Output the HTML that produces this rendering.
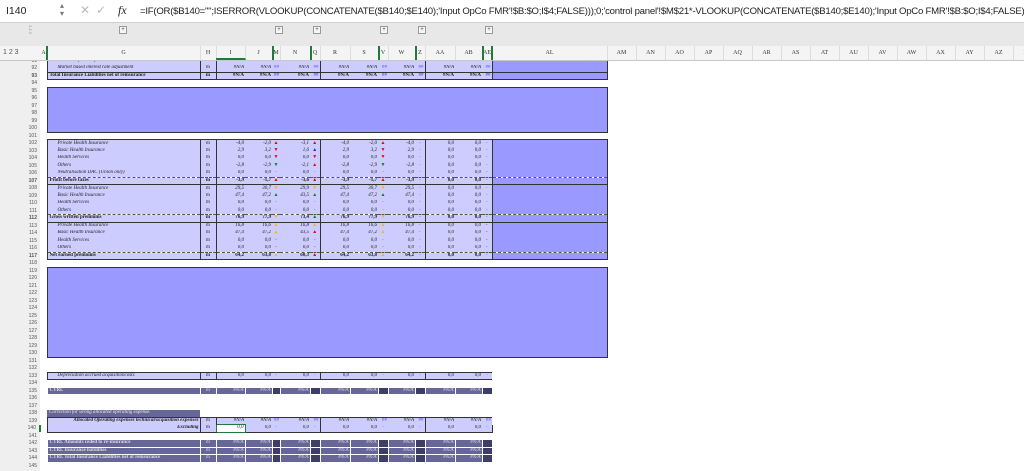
<!DOCTYPE html>
<html><head><meta charset="utf-8"><style>
body{margin:0;width:1024px;height:471px;overflow:hidden;background:#fff;position:relative;font-family:"Liberation Sans",sans-serif}
#fb{position:absolute;left:0;top:0;width:1024px;height:22px;background:#fff;border-bottom:1px solid #d0d0d0;z-index:5;font-size:10.5px;color:#222;overflow:hidden}
#fb span{position:absolute;top:5px;white-space:nowrap}
#ob{position:absolute;left:0;top:23px;width:1024px;height:23px;background:#e8e8e8;z-index:5}
.pl{position:absolute;top:3px;width:6px;height:6px;border:1px solid #999;background:#f6f6f6;font-size:6px;line-height:6px;text-align:center;color:#555}
#ch{position:absolute;left:0;top:46px;width:1024px;height:14px;background:#f4f4f4;border-bottom:1px solid #c8c8c8;z-index:5;font-family:"Liberation Serif",serif;font-size:6px;color:#333}
#ch div{position:absolute;top:0;height:14px;line-height:14px;text-align:center;border-right:1px solid #ddd}
#ch i{position:absolute;top:0;width:2px;height:14px;background:#1f7a3c}
#lft{position:absolute;left:0;top:60px;width:40px;height:411px;background:#efefef}
table{position:absolute;top:57px;left:0;border-collapse:collapse;table-layout:fixed}
td{height:7.5px;padding:0 1px;font:italic 5px "Liberation Serif",serif;white-space:nowrap;overflow:hidden;line-height:6px;text-align:right;color:#222;box-sizing:border-box}
td.rh{background:#efefef;font-style:normal;font-family:"Liberation Sans",sans-serif;font-size:5px;color:#555;text-align:right;padding-right:3px}
tr.n td:nth-child(n+3){background:#ccccff}
tr.n td:nth-child(18){background:#9999ff}
tr.n td:nth-child(3),tr.n td:nth-child(4),tr.n td:nth-child(5),tr.n td:nth-child(10),tr.n td:nth-child(15),tr.n td:nth-child(18){border-left:1px solid #333}
tr.n td:nth-child(18){border-right:1px solid #333}
tr.t td:nth-child(n+3){border-top:1px solid #333}
tr.bt td:nth-child(n+3){border-bottom:1px solid #333}
tr.ds td:nth-child(n+3){border-top:1px dashed #555}
td.g{text-align:left;padding-left:10px}
tr.B td{font-style:normal;font-weight:bold}
tr.B td.g{padding-left:2px}
td.h{text-align:center;font-style:normal}
td.ar{text-align:center;font-style:normal;font-size:5px;color:#66f}
.r{color:#e00!important}.bl{color:#22e!important}.gr{color:#080!important}.y{color:#eb0!important}
.big{background:#9999ff;border:1px solid #333}
tr.c td:nth-child(n+3){background:#666699;color:#ddd;border:1px solid #fff}
tr.c td.k{background:#3d3d66}
tr.c td.g{text-align:left;padding-left:2px;font-weight:bold;font-style:normal}
.hs{color:#55f!important;font-style:normal}
</style></head><body>
<div id="fb"><span style="left:6px">I140</span><span style="left:60px;top:2px;font-size:8px;color:#777;line-height:8px">▴<br>▾</span><span style="left:80px;color:#bbb;font-size:12px;top:3px">✕</span><span style="left:96px;color:#bbb;font-size:12px;top:3px">✓</span><span style="left:118px;font-family:'Liberation Serif',serif;font-style:italic;font-size:12px;top:3px">fx</span><span style="left:140px;font-size:9.6px;letter-spacing:-0.25px;top:6px">=IF(OR($B140="";ISERROR(VLOOKUP(CONCATENATE($B140;$E140);'Input OpCo FMR'!$B:$O;I$4;FALSE)));0;'control panel'!$M$21*-VLOOKUP(CONCATENATE($B140;$E140);'Input OpCo FMR'!$B:$O;I$4;FALSE))</span></div>
<div id="ob"><div class="pl" style="left:119px">+</div><div class="pl" style="left:275px">+</div><div class="pl" style="left:313px">+</div><div class="pl" style="left:380px">+</div><div class="pl" style="left:418px">+</div><div class="pl" style="left:485px">+</div><div style="position:absolute;left:28px;top:2px;font-size:4px;color:#888;writing-mode:vertical-rl">1 2 3</div></div>
<div id="ch"><span style="position:absolute;left:3px;top:3px;font-family:'Liberation Sans';font-size:7px;color:#555">1 2 3</span>
<div style="left:40px;width:7px">A</div><div style="left:47px;width:153px">G</div><div style="left:200px;width:16px">H</div><div style="left:216px;width:29px;border-bottom:2px solid #1f7a3c;height:12px">I</div><div style="left:245px;width:27px">J</div><div style="left:272px;width:8px">M</div><div style="left:280px;width:30px">N</div><div style="left:310px;width:10px">Q</div><div style="left:320px;width:30px">R</div><div style="left:350px;width:28px">S</div><div style="left:378px;width:10px">V</div><div style="left:388px;width:27px">W</div><div style="left:415px;width:10px">Z</div><div style="left:425px;width:30px">AA</div><div style="left:455px;width:27px">AB</div><div style="left:482px;width:10px">AE</div><div style="left:492px;width:115px">AL</div>
<div style="left:607px;width:29px">AM</div><div style="left:636px;width:29px">AN</div><div style="left:665px;width:29px">AO</div><div style="left:694px;width:29px">AP</div><div style="left:723px;width:29px">AQ</div><div style="left:752px;width:29px">AR</div><div style="left:781px;width:29px">AS</div><div style="left:810px;width:29px">AT</div><div style="left:839px;width:29px">AU</div><div style="left:868px;width:29px">AV</div><div style="left:897px;width:29px">AW</div><div style="left:926px;width:29px">AX</div><div style="left:955px;width:29px">AY</div><div style="left:984px;width:29px">AZ</div><div style="left:1013px;width:29px">BA</div>
<i style="left:46px"></i><i style="left:272px"></i><i style="left:310px"></i><i style="left:378px"></i><i style="left:415px"></i><i style="left:482px"></i><i style="left:491px"></i></div>
<div id="lft"></div>
<table>
<colgroup><col style="width:40px"><col style="width:7px"><col style="width:153px"><col style="width:16px"><col style="width:29px"><col style="width:27px"><col style="width:8px"><col style="width:30px"><col style="width:10px"><col style="width:30px"><col style="width:28px"><col style="width:10px"><col style="width:27px"><col style="width:10px"><col style="width:30px"><col style="width:27px"><col style="width:10px"><col style="width:115px"></colgroup>
<tr class="n"><td class="rh">91</td><td></td><td class="g">Provision for unexpired risk</td><td class="h">m</td><td>#N/A</td><td>#N/A</td><td class="hs">##</td><td>#N/A</td><td class="hs">##</td><td>#N/A</td><td>#N/A</td><td class="hs">##</td><td>#N/A</td><td class="hs">##</td><td>#N/A</td><td>#N/A</td><td class="hs">##</td><td></td></tr>
<tr class="n bt"><td class="rh">92</td><td></td><td class="g">Market based interest rate adjustment</td><td class="h">m</td><td>#N/A</td><td>#N/A</td><td class="hs">##</td><td>#N/A</td><td class="hs">##</td><td>#N/A</td><td>#N/A</td><td class="hs">##</td><td>#N/A</td><td class="hs">##</td><td>#N/A</td><td>#N/A</td><td class="hs">##</td><td></td></tr>
<tr class="n B bt t"><td class="rh">93</td><td></td><td class="g">Total Insurance Liabilities net of reinsurance</td><td class="h">m</td><td>#N/A</td><td>#N/A</td><td class="hs">##</td><td>#N/A</td><td class="hs">##</td><td>#N/A</td><td>#N/A</td><td class="hs">##</td><td>#N/A</td><td class="hs">##</td><td>#N/A</td><td>#N/A</td><td class="hs">##</td><td></td></tr>
<tr><td class="rh">94</td><td colspan="17"></td></tr>
<tr><td class="rh">95</td><td></td><td colspan="16" rowspan="6" class="big"></td></tr>
<tr><td class="rh">96</td><td></td></tr><tr><td class="rh">97</td><td></td></tr><tr><td class="rh">98</td><td></td></tr><tr><td class="rh">99</td><td></td></tr><tr><td class="rh">100</td><td></td></tr>
<tr><td class="rh">101</td><td colspan="17"></td></tr>
<tr class="n t"><td class="rh">102</td><td></td><td class="g">Private Health Insurance</td><td class="h">m</td><td>-4,0</td><td>-2,0</td><td class="ar r">▲</td><td>-3,1</td><td class="ar r">▲</td><td>-4,0</td><td>-2,0</td><td class="ar r">▲</td><td>-4,0</td><td class="ar">-</td><td>0,0</td><td>0,0</td><td class="ar">-</td><td></td></tr>
<tr class="n"><td class="rh">103</td><td></td><td class="g">Basic Health Insurance</td><td class="h">m</td><td>2,9</td><td>3,2</td><td class="ar r">▼</td><td>1,6</td><td class="ar bl">▲</td><td>2,9</td><td>3,2</td><td class="ar r">▼</td><td>2,9</td><td class="ar">-</td><td>0,0</td><td>0,0</td><td class="ar">-</td><td></td></tr>
<tr class="n"><td class="rh">104</td><td></td><td class="g">Health Services</td><td class="h">m</td><td>0,0</td><td>0,0</td><td class="ar r">▼</td><td>0,0</td><td class="ar r">▼</td><td>0,0</td><td>0,0</td><td class="ar r">▼</td><td>0,0</td><td class="ar">-</td><td>0,0</td><td>0,0</td><td class="ar">-</td><td></td></tr>
<tr class="n"><td class="rh">105</td><td></td><td class="g">Others</td><td class="h">m</td><td>-2,8</td><td>-2,9</td><td class="ar gr">▼</td><td>-2,1</td><td class="ar r">▲</td><td>-2,8</td><td>-2,9</td><td class="ar gr">▼</td><td>-2,8</td><td class="ar">-</td><td>0,0</td><td>0,0</td><td class="ar">-</td><td></td></tr>
<tr class="n"><td class="rh">106</td><td></td><td class="g">Neutralisation DAC (Union only)</td><td class="h">m</td><td>0,0</td><td>0,0</td><td class="ar">-</td><td>0,0</td><td class="ar">-</td><td>0,0</td><td>0,0</td><td class="ar">-</td><td>0,0</td><td class="ar">-</td><td>0,0</td><td>0,0</td><td class="ar">-</td><td></td></tr>
<tr class="n B ds bt"><td class="rh">107</td><td></td><td class="g">Profit before taxes</td><td class="h">m</td><td>-3,9</td><td>-1,7</td><td class="ar r">▲</td><td>-3,6</td><td class="ar r">▲</td><td>-3,9</td><td>-1,7</td><td class="ar r">▲</td><td>-3,9</td><td class="ar">-</td><td>0,0</td><td>0,0</td><td class="ar">-</td><td></td></tr>
<tr class="n"><td class="rh">108</td><td></td><td class="g">Private Health Insurance</td><td class="h">m</td><td>29,5</td><td>30,7</td><td class="ar y">▼</td><td>29,9</td><td class="ar y">▼</td><td>29,5</td><td>30,7</td><td class="ar y">▼</td><td>29,5</td><td class="ar">-</td><td>0,0</td><td>0,0</td><td class="ar">-</td><td></td></tr>
<tr class="n"><td class="rh">109</td><td></td><td class="g">Basic Health Insurance</td><td class="h">m</td><td>47,4</td><td>47,2</td><td class="ar gr">▲</td><td>43,5</td><td class="ar gr">▲</td><td>47,4</td><td>47,2</td><td class="ar gr">▲</td><td>47,4</td><td class="ar">-</td><td>0,0</td><td>0,0</td><td class="ar">-</td><td></td></tr>
<tr class="n"><td class="rh">110</td><td></td><td class="g">Health Services</td><td class="h">m</td><td>0,0</td><td>0,0</td><td class="ar">-</td><td>0,0</td><td class="ar">-</td><td>0,0</td><td>0,0</td><td class="ar">-</td><td>0,0</td><td class="ar">-</td><td>0,0</td><td>0,0</td><td class="ar">-</td><td></td></tr>
<tr class="n"><td class="rh">111</td><td></td><td class="g">Others</td><td class="h">m</td><td>0,0</td><td>0,0</td><td class="ar">-</td><td>0,0</td><td class="ar">-</td><td>0,0</td><td>0,0</td><td class="ar">-</td><td>0,0</td><td class="ar">-</td><td>0,0</td><td>0,0</td><td class="ar">-</td><td></td></tr>
<tr class="n B ds bt"><td class="rh">112</td><td></td><td class="g">Gross written premiums</td><td class="h">m</td><td>76,9</td><td>77,9</td><td class="ar y">▼</td><td>73,4</td><td class="ar gr">▲</td><td>76,9</td><td>77,9</td><td class="ar y">▼</td><td>76,9</td><td class="ar">-</td><td>0,0</td><td>0,0</td><td class="ar">-</td><td></td></tr>
<tr class="n"><td class="rh">113</td><td></td><td class="g">Private Health Insurance</td><td class="h">m</td><td>16,8</td><td>16,6</td><td class="ar y">▲</td><td>16,8</td><td class="ar y">▲</td><td>16,8</td><td>16,6</td><td class="ar y">▲</td><td>16,8</td><td class="ar">-</td><td>0,0</td><td>0,0</td><td class="ar r">-</td><td></td></tr>
<tr class="n"><td class="rh">114</td><td></td><td class="g">Basic Health Insurance</td><td class="h">m</td><td>47,4</td><td>47,2</td><td class="ar y">▲</td><td>43,5</td><td class="ar r">▲</td><td>47,4</td><td>47,2</td><td class="ar y">▲</td><td>47,4</td><td class="ar">-</td><td>0,0</td><td>0,0</td><td class="ar r">-</td><td></td></tr>
<tr class="n"><td class="rh">115</td><td></td><td class="g">Health Services</td><td class="h">m</td><td>0,0</td><td>0,0</td><td class="ar r">-</td><td>0,0</td><td class="ar r">-</td><td>0,0</td><td>0,0</td><td class="ar">-</td><td>0,0</td><td class="ar">-</td><td>0,0</td><td>0,0</td><td class="ar r">-</td><td></td></tr>
<tr class="n"><td class="rh">116</td><td></td><td class="g">Others</td><td class="h">m</td><td>0,0</td><td>0,0</td><td class="ar r">-</td><td>0,0</td><td class="ar r">-</td><td>0,0</td><td>0,0</td><td class="ar">-</td><td>0,0</td><td class="ar">-</td><td>0,0</td><td>0,0</td><td class="ar r">-</td><td></td></tr>
<tr class="n B ds bt"><td class="rh">117</td><td></td><td class="g">Net earned premiums</td><td class="h">m</td><td>64,2</td><td>63,8</td><td class="ar y">▲</td><td>60,3</td><td class="ar r">▲</td><td>64,2</td><td>63,8</td><td class="ar y">▲</td><td>64,2</td><td class="ar">-</td><td>0,0</td><td>0,0</td><td class="ar">-</td><td></td></tr>
<tr><td class="rh">118</td><td colspan="17"></td></tr>
<tr><td class="rh">119</td><td></td><td colspan="16" rowspan="12" class="big"></td></tr>
<tr><td class="rh">120</td><td></td></tr><tr><td class="rh">121</td><td></td></tr><tr><td class="rh">122</td><td></td></tr><tr><td class="rh">123</td><td></td></tr><tr><td class="rh">124</td><td></td></tr><tr><td class="rh">125</td><td></td></tr><tr><td class="rh">126</td><td></td></tr><tr><td class="rh">127</td><td></td></tr><tr><td class="rh">128</td><td></td></tr><tr><td class="rh">129</td><td></td></tr><tr><td class="rh">130</td><td></td></tr>
<tr><td class="rh">131</td><td colspan="17"></td></tr>
<tr><td class="rh">132</td><td colspan="17"></td></tr>
<tr class="n t bt"><td class="rh">133</td><td></td><td class="g">Depreciation accrued acquisitioncosts</td><td class="h">m</td><td>0,0</td><td>0,0</td><td class="ar">-</td><td>0,0</td><td class="ar">-</td><td>0,0</td><td>0,0</td><td class="ar">-</td><td>0,0</td><td class="ar">-</td><td>0,0</td><td>0,0</td><td class="ar">-</td><td style="background:#fff;border:none"></td></tr>
<tr><td class="rh">134</td><td colspan="17"></td></tr>
<tr class="c"><td class="rh">135</td><td></td><td class="g">CTRL</td><td class="h">m</td><td>#N/A</td><td>#N/A</td><td class="k"></td><td>#N/A</td><td class="k"></td><td>#N/A</td><td>#N/A</td><td class="k"></td><td>#N/A</td><td class="k"></td><td>#N/A</td><td>#N/A</td><td class="k"></td><td style="background:#fff"></td></tr>
<tr><td class="rh">136</td><td colspan="17"></td></tr>
<tr><td class="rh">137</td><td colspan="17"></td></tr>
<tr><td class="rh">138</td><td></td><td style="background:#666699;color:#eee;text-align:left;padding-left:2px">Correction for wrong allocated operating expense.</td><td colspan="15"></td></tr>
<tr class="n t"><td class="rh">139</td><td></td><td style="font-weight:bold">Allocated Operating expenses technical/acquisition expenses</td><td class="h">m</td><td>#N/A</td><td>#N/A</td><td class="hs">##</td><td>#N/A</td><td class="hs">##</td><td>#N/A</td><td>#N/A</td><td class="hs">##</td><td>#N/A</td><td class="hs">##</td><td>#N/A</td><td>#N/A</td><td class="hs">##</td><td style="background:#fff;border:none"></td></tr>
<tr class="n bt"><td class="rh" style="border-right:2px solid #1f7a3c">140</td><td></td><td style="font-weight:bold">Excluding</td><td class="h">m</td><td style="background:#fff;border:1.5px solid #1f7a3c">0,0</td><td>0,0</td><td class="ar">-</td><td>0,0</td><td class="ar">-</td><td>0,0</td><td>0,0</td><td class="ar">-</td><td>0,0</td><td class="ar">-</td><td>0,0</td><td>0,0</td><td class="ar">-</td><td style="background:#fff;border:none;border-left:1px solid #333"></td></tr>
<tr><td class="rh">141</td><td colspan="17"></td></tr>
<tr class="c"><td class="rh">142</td><td></td><td class="g">CTRL Amounts ceded to re-insurance</td><td class="h">m</td><td>#N/A</td><td>#N/A</td><td class="k"></td><td>#N/A</td><td class="k"></td><td>#N/A</td><td>#N/A</td><td class="k"></td><td>#N/A</td><td class="k"></td><td>#N/A</td><td>#N/A</td><td class="k"></td><td style="background:#fff"></td></tr>
<tr class="c"><td class="rh">143</td><td></td><td class="g">CTRL Insurance liabilities</td><td class="h">m</td><td>#N/A</td><td>#N/A</td><td class="k"></td><td>#N/A</td><td class="k"></td><td>#N/A</td><td>#N/A</td><td class="k"></td><td>#N/A</td><td class="k"></td><td>#N/A</td><td>#N/A</td><td class="k"></td><td style="background:#fff"></td></tr>
<tr class="c"><td class="rh">144</td><td></td><td class="g">CTRL Total Insurance Liabilities net of reinsurance</td><td class="h">m</td><td>#N/A</td><td>#N/A</td><td class="k"></td><td>#N/A</td><td class="k"></td><td>#N/A</td><td>#N/A</td><td class="k"></td><td>#N/A</td><td class="k"></td><td>#N/A</td><td>#N/A</td><td class="k"></td><td style="background:#fff"></td></tr>
<tr><td class="rh">145</td><td colspan="17"></td></tr>
</table>
</body></html>
